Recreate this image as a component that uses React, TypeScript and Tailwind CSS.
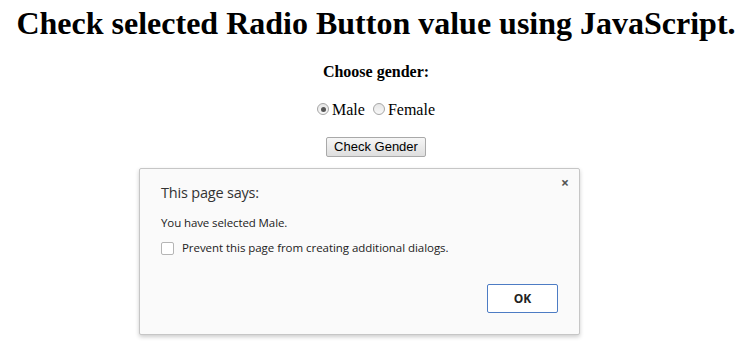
import React from "react";

function Radio({ checked }: { checked?: boolean }) {
  return (
    <span className="inline-flex h-[12px] w-[12px] items-center justify-center rounded-full border border-[#a6a6a6] bg-[linear-gradient(#e6e6e6,#f8f8f8)]">
      {checked ? <span className="h-[5px] w-[5px] rounded-full bg-[#555]" /> : null}
    </span>
  );
}

export default function App() {
  return (
    <div className="relative h-[352px] w-[740px] overflow-hidden bg-white pl-[12px] text-black font-['Liberation_Serif',serif]">
      <h1 className="pt-[5px] text-center text-[32px] font-bold leading-[36px] whitespace-nowrap">
        Check selected Radio Button value using JavaScript.
      </h1>
      <p className="mt-[22px] text-center text-[16px] font-bold leading-[18px]">Choose gender:</p>
      <div className="mt-[20px] flex items-center justify-center text-[16px] leading-[18px]">
        <span className="-mt-[2px] mr-[3px] flex"><Radio checked /></span>
        <span>Male</span>
        <span className="-mt-[2px] ml-[8px] mr-[3px] flex"><Radio /></span>
        <span>Female</span>
      </div>
      <div className="mt-[18px] flex justify-center">
        <button className="h-[20px] w-[100px] rounded-[2px] border border-[#a9a9a9] bg-[linear-gradient(#f6f6f6,#dedede)] text-[13px] leading-[16px] text-black font-['Liberation_Sans',Arial,sans-serif]">
          Check Gender
        </button>
      </div>

      <div className="absolute left-[139px] top-[168px] h-[167px] w-[441px] rounded-[2px] border border-[#c6c6c6] bg-[#fafafa] shadow-[0_2px_4px_rgba(0,0,0,0.2)] font-['Open_Sans','Noto_Sans',sans-serif] text-[#333]">
        <div className="absolute right-[10px] top-[7px] text-[14px] font-bold leading-[14px] text-[#555]">×</div>
        <div className="pl-[21px] pt-[14px]">
          <div className="text-[14.5px] leading-[20px] tracking-[-0.2px] text-[#333]">This page says:</div>
          <div className="mt-[12px] text-[11.5px] leading-[16px] tracking-[-0.1px] text-[#222]">You have selected Male.</div>
          <div className="mt-[9px] flex items-center">
            <span className="h-[13px] w-[13px] rounded-[2px] border border-[#b5b5b5] bg-white" />
            <span className="ml-[8px] text-[11.5px] leading-[16px] tracking-[-0.05px] text-[#222]">
              Prevent this page from creating additional dialogs.
            </span>
          </div>
        </div>
        <div className="absolute left-[347px] top-[115px] flex h-[29px] w-[71px] items-center justify-center rounded-[2px] border border-[#4d7cc4] bg-white text-[12px] font-bold text-[#222]">
          OK
        </div>
      </div>
    </div>
  );
}
